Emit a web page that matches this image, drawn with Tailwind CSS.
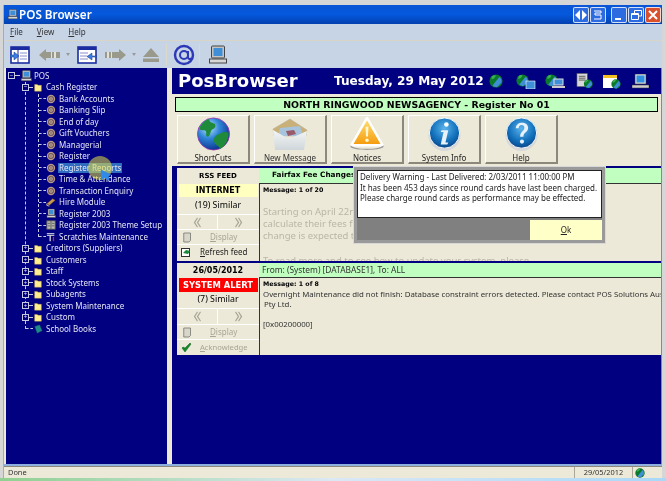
<!DOCTYPE html>
<html><head><meta charset="utf-8">
<script src="https://cdn.jsdelivr.net/npm/@tailwindcss/browser@4"></script>
</head>
<body class="m-0 overflow-hidden bg-[#d6d6d6]">
<svg class="absolute w-0 h-0">
<defs>
<radialGradient id="gb" cx="35%" cy="30%" r="75%"><stop offset="0" stop-color="#bfe6ff"/><stop offset=".45" stop-color="#2f86d8"/><stop offset="1" stop-color="#0a2f8a"/></radialGradient>
<radialGradient id="gi" cx="50%" cy="35%" r="70%"><stop offset="0" stop-color="#5cb4ec"/><stop offset=".6" stop-color="#1270bb"/><stop offset="1" stop-color="#0a3f7f"/></radialGradient>
<linearGradient id="gw" x1="0" y1="0" x2="0" y2="1"><stop offset="0" stop-color="#ffe27a"/><stop offset="1" stop-color="#f59a0a"/></linearGradient>
<linearGradient id="ge" x1="0" y1="0" x2="0" y2="1"><stop offset="0" stop-color="#f4f6f6"/><stop offset="1" stop-color="#cfd6da"/></linearGradient>
<symbol id="globe" viewBox="0 0 36 36"><circle cx="18" cy="18" r="17" fill="url(#gb)" stroke="#a030b0" stroke-width=".8"/><path d="M13 2c-5 2-9 6-10 11 3 2 5 0 7 2 1 3-1 5 2 6 3-1 2-6 5-8 3-1 4-4 2-6-2-1-5-1-6-5zM34 17c-3-2-7-1-10 1-4 1-7 5-5 9 2 4 5 3 6 7 5-3 9-9 9-17z" fill="#1e8a3a"/></symbol>
<symbol id="sglobe" viewBox="0 0 16 16"><circle cx="8" cy="8" r="7.500" fill="#0a7a2a"/><path d="M4 13 12 3c2 2 3 5 2 7l-5 5c-2 0-4-1-5-2z" fill="#3f8fd8"/><path d="M3 3c2-2 4-2 5-1-1 2-3 4-5 4z" fill="#38b050"/></symbol>
<symbol id="target" viewBox="0 0 12 12"><circle cx="6" cy="6" r="5" fill="#b9978a"/><circle cx="6" cy="6" r="3.600" fill="#6e5a58"/><circle cx="6" cy="6" r="2.200" fill="#c9b0a4"/><circle cx="6" cy="6" r="1" fill="#6a4b48"/></symbol>
<symbol id="folder" viewBox="0 0 12 12"><path d="M2 3h3l1 1h4v7H2z" fill="#ffee90" stroke="#c9a93a" stroke-width=".5"/></symbol>
<symbol id="pc" viewBox="0 0 20 20"><rect x="4" y="1" width="13" height="12" rx="1" fill="#c4c4c4" stroke="#444"/><rect x="6" y="3" width="9" height="8" fill="#3f8fd8"/><rect x="2" y="14" width="17" height="4" fill="#d6d6d6" stroke="#444"/></symbol>
<symbol id="chev" viewBox="0 0 12 12" preserveAspectRatio="none"><path d="M6 1 2 6l4 5M10 1 6 6l4 5" fill="none" stroke="#a8a596" stroke-width="1.500"/></symbol>
<symbol id="page" viewBox="0 0 12 14"><path d="M1 1h9v10l-2 2H1z" fill="#d8d6ca" stroke="#6f6f6a"/></symbol>
</defs>
</svg>

<div class="relative w-[666px] h-[481px] overflow-hidden blur-[0.3px] text-black [font-family:'Noto_Sans',sans-serif]">
  <div class="h-[5px] bg-[#d6d6d6]"></div>

  <!-- window -->
  <div class="ml-[3px] mr-[4px] h-[473px] flex flex-col bg-[#8fb0de] pl-[1px]">
    <!-- title -->
    <div class="h-[19px] shrink-0 flex items-center pl-[3px] pr-[1px] bg-gradient-to-b from-[#0a55d6] via-[#0558dc] to-[#0340b0] text-white">
      <svg class="w-[11px] h-[11px] mr-[1px]"><use href="#pc"/></svg>
      <span class="text-[11.700px] font-semibold leading-none">POS Browser</span>
      <div class="ml-auto flex items-center gap-[1px]">
        <span class="w-[16px] h-[16px] rounded-[2px] border border-white/80 bg-[#2d6be0] flex items-center justify-center"><svg class="w-[12px] h-[10px]" viewBox="0 0 12 10"><path d="M5 0v10L0 5zM7 0v10l5-5z" fill="#fff"/></svg></span>
        <span class="w-[16px] h-[16px] rounded-[2px] border border-white/80 bg-[#2d6be0] flex items-center justify-center mr-[4px]"><svg class="w-[12px] h-[10px]" viewBox="0 0 12 10"><path d="M2 1h7v2H3v2h6v4H2" fill="none" stroke="#fff"/></svg></span>
        <span class="w-[16px] h-[16px] rounded-[2px] border border-white/80 bg-[#2d6be0] flex items-end justify-center pb-[2px] pr-[3px]"><span class="w-[6px] h-[2px] bg-white"></span></span>
        <span class="w-[16px] h-[16px] rounded-[2px] border border-white/80 bg-[#2d6be0] flex items-center justify-center"><svg class="w-[11px] h-[10px]" viewBox="0 0 11 10"><path d="M3.500 3V.5h7V6H8M.5 3.500h7v6h-7zM.5 4.500h7" fill="none" stroke="#fff"/></svg></span>
        <span class="w-[16px] h-[16px] rounded-[2px] border border-white/80 bg-[#d8502c] flex items-center justify-center"><svg class="w-[10px] h-[10px]" viewBox="0 0 10 10"><path d="M1 1l8 8M9 1 1 9" stroke="#fff" stroke-width="2"/></svg></span>
      </div>
    </div>

    <!-- menu -->
    <div class="h-[17px] shrink-0 flex items-center bg-[#c6d4e6] border-b border-[#d9d5c6] pl-[6px] gap-[14px] text-[8px] text-[#333]">
      <span><u>F</u>ile</span><span><u>V</u>iew</span><span><u>H</u>elp</span>
    </div>

    <!-- toolbar -->
    <div class="h-[27px] shrink-0 flex items-center bg-[#c6d4e6] pl-[6px]">
      <svg class="w-[20px] h-[18px]" viewBox="0 0 20 18"><rect x="1" y="1" width="18" height="16" fill="#fff" stroke="#1a2ca0" stroke-width="1.600"/><rect x="1" y="1" width="18" height="3" fill="#1a2ca0"/><path d="M8 4v13" stroke="#1a2ca0"/><path d="M10 7h7M10 10h7M10 13h7" stroke="#8a8fc8"/><path d="M0 9h4V6l5 4-5 4v-3H0z" fill="#3a7fe0" stroke="#12308a" stroke-width=".5"/></svg>
      <svg class="w-[21px] h-[14px] ml-[9px]" viewBox="0 0 21 14"><path d="M0 7 7 1v3h14v6H7v3z" fill="#9a9a8c"/><path d="M12 4h1v6h-1zM15 4h2v6h-2z" fill="#e2e2d8"/></svg>
      <svg class="w-[4px] h-[3px] ml-[6px]" viewBox="0 0 4 3"><path d="M0 0h4L2 3z" fill="#999"/></svg>
      <svg class="w-[20px] h-[18px] ml-[7px]" viewBox="0 0 20 18"><rect x="1" y="1" width="18" height="16" fill="#fff" stroke="#1a2ca0" stroke-width="1.600"/><rect x="1" y="1" width="18" height="3" fill="#1a2ca0"/><path d="M3 7h8M3 10h7M3 13h8" stroke="#8a8fc8"/><path d="M20 10h-5V7l-5 3.500 5 3.500v-3h5z" fill="#3a7fe0" stroke="#12308a" stroke-width=".5"/></svg>
      <svg class="w-[21px] h-[14px] ml-[8px]" viewBox="0 0 21 14"><path d="M21 7 14 1v3H0v6h14v3z" fill="#9a9a8c"/><path d="M2 4h2v6H2zM6 4h1v6H6z" fill="#e2e2d8"/></svg>
      <svg class="w-[4px] h-[3px] ml-[6px]" viewBox="0 0 4 3"><path d="M0 0h4L2 3z" fill="#999"/></svg>
      <svg class="w-[16px] h-[14px] ml-[7px]" viewBox="0 0 16 14"><path d="M8 0l8 9H0z" fill="#9a9a8c"/><rect y="10.500" width="16" height="3.500" fill="#9a9a8c"/></svg>
      <span class="w-[1px] h-[22px] bg-[#dcd9ca] ml-[7px]"></span>
      <svg class="w-[22px] h-[22px] ml-[6px]" viewBox="0 0 22 22"><circle cx="11" cy="11" r="9" fill="none" stroke="#2c38b8" stroke-width="2.400"/><circle cx="11" cy="11" r="4" fill="none" stroke="#2c38b8" stroke-width="2"/><path d="M15 7v6c0 2 2 3 4 1" fill="none" stroke="#2c38b8" stroke-width="2"/></svg>
      <span class="w-[1px] h-[22px] bg-[#dcd9ca] ml-[4px]"></span>
      <svg class="w-[21px] h-[20px] ml-[7px]" viewBox="0 0 20 20"><use href="#pc"/></svg>
    </div>

    <!-- main -->
    <div class="h-[396px] shrink-0 flex bg-[#ece9d8] border-r border-[#8a8a8a]">
      <!-- left tree -->
      <div class="w-[161px] ml-[2px] shrink-0 bg-[#000080] relative pt-[2px] text-[8px] text-[#e4e4f4] leading-none">
        <!-- tree lines -->
        <div class="absolute left-[19px] top-[14px] h-[247px] border-l border-dashed border-[#c8c8e0]"></div>
        <div class="absolute left-[32px] top-[26px] h-[143px] border-l border-dashed border-[#c8c8e0]"></div>

        <div class="flex items-center h-[11.500px] pl-[2px]"><span class="w-[7px] h-[7px] border border-[#c8c8e0] bg-[#000080] relative z-10 flex items-center justify-center text-[6px]">−</span><span class="w-[5px] border-t border-dashed border-[#c8c8e0]"></span><svg class="w-[12px] h-[12px] mr-[2px]"><use href="#pc"/></svg><span>POS</span></div>
        <div class="flex items-center h-[11.500px] pl-[16px]"><span class="w-[7px] h-[7px] border border-[#c8c8e0] bg-[#000080] relative z-10 flex items-center justify-center text-[6px]">−</span><span class="w-[4px] border-t border-dashed border-[#c8c8e0]"></span><svg class="w-[10px] h-[10px] mr-[3px]"><use href="#folder"/></svg><span>Cash Register</span></div>

        <div class="flex items-center h-[11.500px] pl-[33px]"><span class="w-[7px] border-t border-dashed border-[#c8c8e0]"></span><svg class="w-[10px] h-[10px] mr-[3px]"><use href="#target"/></svg><span>Bank Accounts</span></div>
        <div class="flex items-center h-[11.500px] pl-[33px]"><span class="w-[7px] border-t border-dashed border-[#c8c8e0]"></span><svg class="w-[10px] h-[10px] mr-[3px]"><use href="#target"/></svg><span>Banking Slip</span></div>
        <div class="flex items-center h-[11.500px] pl-[33px]"><span class="w-[7px] border-t border-dashed border-[#c8c8e0]"></span><svg class="w-[10px] h-[10px] mr-[3px]"><use href="#target"/></svg><span>End of day</span></div>
        <div class="flex items-center h-[11.500px] pl-[33px]"><span class="w-[7px] border-t border-dashed border-[#c8c8e0]"></span><svg class="w-[10px] h-[10px] mr-[3px]"><use href="#target"/></svg><span>Gift Vouchers</span></div>
        <div class="flex items-center h-[11.500px] pl-[33px]"><span class="w-[7px] border-t border-dashed border-[#c8c8e0]"></span><svg class="w-[10px] h-[10px] mr-[3px]"><use href="#target"/></svg><span>Managerial</span></div>
        <div class="flex items-center h-[11.500px] pl-[33px]"><span class="w-[7px] border-t border-dashed border-[#c8c8e0]"></span><svg class="w-[10px] h-[10px] mr-[3px]"><use href="#target"/></svg><span>Register</span></div>
        <div class="flex items-center h-[11.500px] pl-[33px]"><span class="w-[7px] border-t border-dashed border-[#c8c8e0]"></span><svg class="w-[10px] h-[10px] mr-[2px]"><use href="#target"/></svg><span class="bg-[#2f6cc0] px-[1px] h-[10px] flex items-center">Register Reports</span></div>
        <div class="flex items-center h-[11.500px] pl-[33px]"><span class="w-[7px] border-t border-dashed border-[#c8c8e0]"></span><svg class="w-[10px] h-[10px] mr-[3px]"><use href="#target"/></svg><span>Time &amp; Attendance</span></div>
        <div class="flex items-center h-[11.500px] pl-[33px]"><span class="w-[7px] border-t border-dashed border-[#c8c8e0]"></span><svg class="w-[10px] h-[10px] mr-[3px]"><use href="#target"/></svg><span>Transaction Enquiry</span></div>
        <div class="flex items-center h-[11.500px] pl-[33px]"><span class="w-[7px] border-t border-dashed border-[#c8c8e0]"></span><svg class="w-[10px] h-[10px] mr-[3px]" viewBox="0 0 12 12"><path d="M1 8 8 2l3 2-7 6z" fill="#c89a50" stroke="#7a5420" stroke-width=".6"/><path d="M1 8v2l3 1" fill="none" stroke="#e6d6b0"/></svg><span>Hire Module</span></div>
        <div class="flex items-center h-[11.500px] pl-[33px]"><span class="w-[7px] border-t border-dashed border-[#c8c8e0]"></span><svg class="w-[10px] h-[11px] mr-[3px]" viewBox="0 0 20 20"><use href="#pc"/></svg><span>Register 2003</span></div>
        <div class="flex items-center h-[11.500px] pl-[33px]"><span class="w-[7px] border-t border-dashed border-[#c8c8e0]"></span><svg class="w-[10px] h-[10px] mr-[3px]" viewBox="0 0 12 12"><rect x="1" y="1" width="10" height="10" fill="#b8b8b0" stroke="#555"/><path d="M6 1v10M2 4h3M2 7h3M7 4h3M7 7h3" stroke="#555"/></svg><span>Register 2003 Theme Setup</span></div>
        <div class="flex items-center h-[11.500px] pl-[33px]"><span class="w-[7px] border-t border-dashed border-[#c8c8e0]"></span><svg class="w-[10px] h-[10px] mr-[3px]" viewBox="0 0 12 12"><path d="M1 2h9M1 4h9" stroke="#ddd" stroke-width="1.200"/><path d="M5 4v7" stroke="#ddd" stroke-width="1.500"/><path d="M9 6v5" stroke="#e02020" stroke-width="1.500"/></svg><span>Scratchies Maintenance</span></div>

        <div class="flex items-center h-[11.500px] pl-[16px]"><span class="w-[7px] h-[7px] border border-[#c8c8e0] bg-[#000080] relative z-10 flex items-center justify-center text-[6px]">+</span><span class="w-[4px] border-t border-dashed border-[#c8c8e0]"></span><svg class="w-[10px] h-[10px] mr-[3px]"><use href="#folder"/></svg><span>Creditors (Suppliers)</span></div>
        <div class="flex items-center h-[11.500px] pl-[16px]"><span class="w-[7px] h-[7px] border border-[#c8c8e0] bg-[#000080] relative z-10 flex items-center justify-center text-[6px]">+</span><span class="w-[4px] border-t border-dashed border-[#c8c8e0]"></span><svg class="w-[10px] h-[10px] mr-[3px]"><use href="#folder"/></svg><span>Customers</span></div>
        <div class="flex items-center h-[11.500px] pl-[16px]"><span class="w-[7px] h-[7px] border border-[#c8c8e0] bg-[#000080] relative z-10 flex items-center justify-center text-[6px]">+</span><span class="w-[4px] border-t border-dashed border-[#c8c8e0]"></span><svg class="w-[10px] h-[10px] mr-[3px]"><use href="#folder"/></svg><span>Staff</span></div>
        <div class="flex items-center h-[11.500px] pl-[16px]"><span class="w-[7px] h-[7px] border border-[#c8c8e0] bg-[#000080] relative z-10 flex items-center justify-center text-[6px]">+</span><span class="w-[4px] border-t border-dashed border-[#c8c8e0]"></span><svg class="w-[10px] h-[10px] mr-[3px]"><use href="#folder"/></svg><span>Stock Systems</span></div>
        <div class="flex items-center h-[11.500px] pl-[16px]"><span class="w-[7px] h-[7px] border border-[#c8c8e0] bg-[#000080] relative z-10 flex items-center justify-center text-[6px]">+</span><span class="w-[4px] border-t border-dashed border-[#c8c8e0]"></span><svg class="w-[10px] h-[10px] mr-[3px]"><use href="#folder"/></svg><span>Subagents</span></div>
        <div class="flex items-center h-[11.500px] pl-[16px]"><span class="w-[7px] h-[7px] border border-[#c8c8e0] bg-[#000080] relative z-10 flex items-center justify-center text-[6px]">+</span><span class="w-[4px] border-t border-dashed border-[#c8c8e0]"></span><svg class="w-[10px] h-[10px] mr-[3px]"><use href="#folder"/></svg><span>System Maintenance</span></div>
        <div class="flex items-center h-[11.500px] pl-[16px]"><span class="w-[7px] h-[7px] border border-[#c8c8e0] bg-[#000080] relative z-10 flex items-center justify-center text-[6px]">+</span><span class="w-[4px] border-t border-dashed border-[#c8c8e0]"></span><svg class="w-[10px] h-[10px] mr-[3px]"><use href="#folder"/></svg><span>Custom</span></div>
        <div class="flex items-center h-[11.500px] pl-[20px]"><span class="w-[7px] border-t border-dashed border-[#c8c8e0]"></span><svg class="w-[10px] h-[10px] mr-[3px]" viewBox="0 0 12 12"><path d="M2 3l6-2 3 7-6 3z" fill="#1f8a8a" stroke="#0a4a5a" stroke-width=".5"/></svg><span>School Books</span></div>

        <!-- cursor highlight -->
        <div class="absolute left-[82px] top-[88px] w-[24px] h-[24px] rounded-full bg-[#e8e040]/55"></div>
        <svg class="absolute left-[94px] top-[100px] w-[12px] h-[15px]" viewBox="0 0 14 16"><path d="M1 1v13l4-3 6 3-1-5 3-2z" fill="#2f8ae8"/></svg>
      </div>

      <!-- right -->
      <div class="ml-[5px] w-[489px] shrink-0 bg-[#000080] flex flex-col">
        <!-- header -->
        <div class="h-[26px] shrink-0 flex items-center text-white font-bold [font-family:'DejaVu_Sans',sans-serif] pl-[6px]">
          <span class="w-[156px] text-[18px] leading-none">PosBrowser</span>
          <span class="text-[12.100px] leading-none whitespace-nowrap">Tuesday, 29 May 2012</span>
          <svg class="w-[14px] h-[14px] ml-[5px]"><use href="#sglobe"/></svg>
          <svg class="w-[20px] h-[15px] ml-[13px]" viewBox="0 0 20 15"><use href="#sglobe" width="13" height="13"/><rect x="10" y="7" width="9" height="8" fill="#3f8fd8" stroke="#fff" stroke-width=".6"/></svg>
          <svg class="w-[20px] h-[15px] ml-[9px]" viewBox="0 0 20 15"><use href="#sglobe" width="13" height="13"/><rect x="9" y="5" width="9" height="6" fill="#3f8fd8" stroke="#ddd"/><rect x="7" y="12" width="13" height="2" fill="#ccc"/></svg>
          <svg class="w-[17px] h-[16px] ml-[11px]" viewBox="0 0 18 16"><rect x="1" y="0" width="11" height="14" fill="#d8d8d8" stroke="#555" stroke-width=".6"/><path d="M3 3h7M3 5h7M3 7h7" stroke="#555"/><use href="#sglobe" x="8" y="6" width="10" height="10"/></svg>
          <svg class="w-[20px] h-[15px] ml-[9px]" viewBox="0 0 20 15"><rect x="1" y="2" width="14" height="12" fill="#fff"/><rect x="1" y="1" width="14" height="3" fill="#f4c020"/><use href="#sglobe" x="9" y="5" width="10" height="10"/></svg>
          <svg class="w-[17px] h-[15px] ml-[10px]" viewBox="0 0 17 15"><rect x="3" y="0" width="11" height="10" fill="#ddd" stroke="#333" stroke-width=".6"/><rect x="4.500" y="1.500" width="8" height="7" fill="#2f8fe0"/><rect x="0" y="11" width="17" height="3" fill="#ccc" stroke="#333" stroke-width=".5"/></svg>
        </div>

        <!-- beige strip -->
        <div class="h-[72px] shrink-0 bg-[#ece9d8] pt-[3px]">
          <div class="ml-[3px] mr-[3px] h-[15px] bg-[#c0ffc0] border border-black flex items-center justify-center text-[9.400px] font-bold [font-family:'DejaVu_Sans',sans-serif] leading-none">NORTH RINGWOOD NEWSAGENCY - Register No 01</div>
          <div class="flex pl-[5px] pt-[3px] gap-[4px] text-[8px] text-[#222]">
            <div class="w-[73px] h-[49px] border-r-2 border-b-2 border-[#8c897c] border-t border-l border-t-white border-l-white flex flex-col items-center">
              <svg class="w-[35px] h-[35px] mt-[1px]"><use href="#globe"/></svg><span class="leading-none mt-[3px]">ShortCuts</span>
            </div>
            <div class="w-[73px] h-[49px] border-r-2 border-b-2 border-[#8c897c] border-t border-l border-t-white border-l-white flex flex-col items-center">
              <svg class="w-[36px] h-[32px] mt-[2px]" viewBox="0 0 36 32"><path d="M1 11 18 1l17 11-1 6H2z" fill="#c8b078" stroke="#b8b09a" stroke-width=".5"/><path d="M8 10l20-2 3 10H6z" fill="#a8c4dc"/><path d="M1 12 17 21l18-8-3 19H3z" fill="url(#ge)"/><path d="M14 13l8-1 2 4-8 2z" fill="#9a5a6a"/></svg><span class="leading-none mt-[4px] text-[#333]">New Message</span>
            </div>
            <div class="w-[73px] h-[49px] border-r-2 border-b-2 border-[#8c897c] border-t border-l border-t-white border-l-white flex flex-col items-center">
              <svg class="w-[36px] h-[35px] mt-[1px]" viewBox="0 0 36 35"><path d="M18 1 34 29H2z" fill="url(#gw)" stroke="#fff" stroke-width="2.500" stroke-linejoin="round"/><path d="M16.500 10h3l-.5 10h-2z" fill="#fff7d0"/><circle cx="18" cy="24" r="1.800" fill="#fff7d0"/><path d="M1 29c4 5 30 5 34 0v2c-4 4-30 4-34 0z" fill="#9a9a9a"/></svg><span class="leading-none mt-[3px]">Notices</span>
            </div>
            <div class="w-[73px] h-[49px] border-r-2 border-b-2 border-[#8c897c] border-t border-l border-t-white border-l-white flex flex-col items-center">
              <svg class="w-[35px] h-[35px] mt-[1px]" viewBox="0 0 36 36"><circle cx="18" cy="19" r="17" fill="#d8d8d8"/><circle cx="18" cy="17" r="16" fill="url(#gi)" stroke="#fff" stroke-width="1"/><circle cx="20" cy="8" r="2.400" fill="#fff"/><path d="M15 14h7l-3 13h3l-1 2h-7l3-13h-3z" fill="#e8f2fa"/></svg><span class="leading-none mt-[3px]">System Info</span>
            </div>
            <div class="w-[73px] h-[49px] border-r-2 border-b-2 border-[#8c897c] border-t border-l border-t-white border-l-white flex flex-col items-center">
              <svg class="w-[35px] h-[35px] mt-[1px]" viewBox="0 0 36 36"><circle cx="18" cy="19" r="17" fill="#d8d8d8"/><circle cx="18" cy="17" r="16" fill="url(#gi)" stroke="#fff" stroke-width="1"/><path d="M12 12c0-4 3-6 6.500-6s6.500 2 6.500 5.500c0 5-5 4.500-5 9.500h-3.500c0-6 4.500-5.500 4.500-9.500 0-2-1-3-3-3s-3 1.500-3 3.500z" fill="#e8f2fa"/><circle cx="18.500" cy="26" r="2.200" fill="#e8f2fa"/></svg><span class="leading-none mt-[3px]">Help</span>
            </div>
          </div>
        </div>

        <!-- panel 1 -->
        <div class="h-[93px] shrink-0 mt-[2px] ml-[5px] flex bg-[#ece9d8] overflow-hidden text-[8px]">
          <div class="w-[82px] shrink-0 flex flex-col items-center">
            <div class="h-[16px] flex items-center font-bold text-[7px] [font-family:'DejaVu_Sans',sans-serif]">RSS FEED</div>
            <div class="w-[79px] h-[13px] bg-[#ffffc0] flex items-center justify-center font-bold text-[8px] [font-family:'DejaVu_Sans',sans-serif]">INTERNET</div>
            <div class="h-[17px] flex items-center text-[8.800px]">(19) Similar</div>
            <div class="w-full h-[15px] flex border-t border-white"><div class="w-1/2 flex items-center justify-center border-r border-white"><svg class="w-[9px] h-[11px]"><use href="#chev"/></svg></div><div class="w-1/2 flex items-center justify-center"><svg class="w-[9px] h-[11px] -scale-x-100"><use href="#chev"/></svg></div></div>
            <div class="w-full h-[15px] flex items-center border-t border-white text-[#a8a596] pl-[6px]"><svg class="w-[9px] h-[11px]"><use href="#page"/></svg><span class="ml-[18px]"><u>D</u>isplay</span></div>
            <div class="w-full h-[15px] flex items-center border-t border-white pl-[4px] text-[#222]"><svg class="w-[10px] h-[10px]" viewBox="0 0 10 10"><rect x=".5" y="1.500" width="8" height="8" fill="#fff" stroke="#333"/><path d="M2 6l3-3 4 1-2 3z" fill="#1a8a3a"/></svg><span class="ml-[9px]"><u>R</u>efresh feed</span></div>
          </div>
          <div class="flex-1 min-w-0 flex flex-col">
            <div class="h-[16px] shrink-0 bg-[#c0ffc0] border-b border-[#333] flex items-center pl-[13px] font-bold text-[7.300px] [font-family:'DejaVu_Sans',sans-serif]">Fairfax Fee Changes</div>
            <div class="flex-1 border-l border-[#333] pl-[3px] pt-[1px] overflow-hidden whitespace-nowrap">
              <div class="font-bold text-[6.300px] leading-[10px] [font-family:'DejaVu_Sans',sans-serif]">Message: 1 of 20</div>
              <div class="mt-[11px] text-[#bab6a6] text-[9.500px] leading-[12px]">Starting on April 22nd newsagents will<br>calculate their fees for magazines<br>change is expected to</div>
              <div class="mt-[13px] text-[#bab6a6] text-[9.500px] leading-[12px]">To read more and to see how to update your system, please</div>
            </div>
          </div>
        </div>

        <!-- panel 2 -->
        <div class="h-[92px] shrink-0 mt-[2px] ml-[5px] flex bg-[#ece9d8] overflow-hidden text-[8px]">
          <div class="w-[82px] shrink-0 flex flex-col items-center">
            <div class="h-[15px] flex items-center font-bold text-[8px] [font-family:'DejaVu_Sans',sans-serif]">26/05/2012</div>
            <div class="w-[79px] h-[14px] bg-[#ff0000] text-white flex items-center justify-center font-bold text-[8.400px] whitespace-nowrap [font-family:'DejaVu_Sans',sans-serif]">SYSTEM ALERT</div>
            <div class="h-[16px] flex items-center text-[8.800px]">(7) Similar</div>
            <div class="w-full h-[16px] flex border-t border-white"><div class="w-1/2 flex items-center justify-center border-r border-white"><svg class="w-[9px] h-[11px]"><use href="#chev"/></svg></div><div class="w-1/2 flex items-center justify-center"><svg class="w-[9px] h-[11px] -scale-x-100"><use href="#chev"/></svg></div></div>
            <div class="w-full h-[15px] flex items-center border-t border-white text-[#a8a596] pl-[6px]"><svg class="w-[9px] h-[11px]"><use href="#page"/></svg><span class="ml-[18px]"><u>D</u>isplay</span></div>
            <div class="w-full h-[16px] flex items-center border-t border-white pl-[4px] text-[#a8a596]"><svg class="w-[11px] h-[10px]" viewBox="0 0 11 10"><path d="M1 5l3 4 6-8-1-1-5 5-2-1z" fill="#128a28" stroke="#0a5a18" stroke-width=".5"/></svg><span class="ml-[8px] text-[7.600px]"><u>A</u>cknowledge</span></div>
          </div>
          <div class="flex-1 min-w-0 flex flex-col">
            <div class="h-[15px] shrink-0 bg-[#c0ffc0] border-b border-[#333] flex items-center pl-[3px] text-[8.400px] text-[#333]">From: (System) [DATABASE1], To: ALL</div>
            <div class="flex-1 border-l border-[#333] pl-[3px] pt-[1px] overflow-hidden whitespace-nowrap text-[7.850px] leading-[10px] text-[#333]">
              <div class="font-bold text-[6.300px] text-black [font-family:'DejaVu_Sans',sans-serif]">Message: 1 of 8</div>
              <div>Overnight Maintenance did not finish: Database constraint errors detected. Please contact POS Solutions Aus</div>
              <div class="pl-[1px]">Pty Ltd.</div>
              <div class="mt-[10px]">[0x00200000]</div>
            </div>
          </div>
        </div>
      </div>
    </div>

    <!-- status -->
    <div class="mt-[2px] h-[12px] shrink-0 flex items-stretch bg-[#ece9d8] border-t border-[#8c897c] text-[7.400px] text-[#333]">
      <div class="flex-1 flex items-center pl-[4px]">Done</div>
      <div class="w-[58px] flex items-center justify-center border-l border-[#aaa79a]">29/05/2012</div>
      <div class="w-[30px] flex items-center pl-[2px] border-l border-[#aaa79a]"><svg class="w-[10px] h-[10px]"><use href="#sglobe"/></svg></div>
    </div>
  </div>

  <!-- dialog -->
  <div class="absolute left-[354px] top-[167px] w-[251px] h-[76px] bg-[#808080] border-[3px] border-[#9a9a9a] shadow-[0_0_0_1px_#d8d8d8]">
    <div class="h-[48px] bg-white border border-[#222] px-[2px] pt-[1px] text-[8px] leading-[10.500px] text-[#222]">
      <div>Delivery Warning - Last Delivered: 2/03/2011 11:00:00 PM</div>
      <div>It has been 453 days since round cards have last been charged.</div>
      <div>Please charge round cards as performance may be effected.</div>
    </div>
    <div class="flex justify-end pt-[2px]"><div class="w-[72px] h-[20px] bg-[#ffffc8] flex items-center justify-center text-[8px] text-[#222]"><u>O</u>k</div></div>
  </div>

  <!-- desktop strip -->
  <div class="absolute left-0 bottom-0 w-[666px] h-[3px] bg-gradient-to-r from-[#90d090] via-[#dbe8f5] to-[#a8d8f8]"></div>
</div>
</body></html>
